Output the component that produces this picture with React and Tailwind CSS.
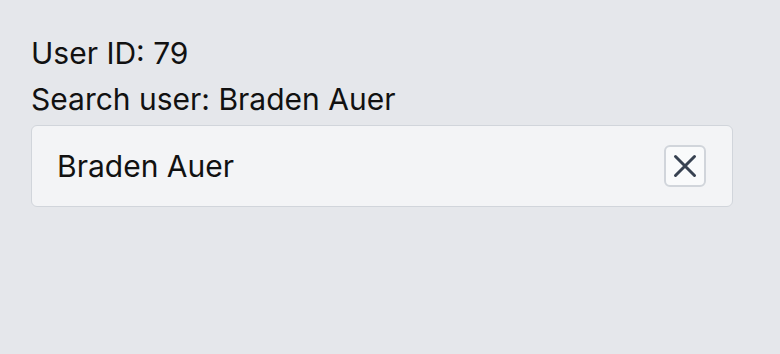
const App = () => {
  return (
    <div className="min-h-[354px] w-full bg-[#e5e7eb] pt-[30px] pl-[31px] pr-[47px] font-['Inter',sans-serif] text-[30px] text-[#111111]">
      <div className="leading-[46px]">User ID: 79</div>
      <div className="leading-[46px]">Search user: Braden Auer</div>

      {/* search box */}
      <div className="mt-[3px] flex h-[82px] items-center justify-between rounded-md border border-[#d1d5db] bg-[#f3f4f6] pl-[25px] pr-[26px]">
        <span>Braden Auer</span>
        <button className="flex h-[42px] w-[42px] items-center justify-center rounded-md border-2 border-[#d1d5db] bg-[#f9fafb] text-[#374151]">
          <svg width="24" height="24" viewBox="0 0 24 24" fill="none" stroke="currentColor" strokeWidth="3" strokeLinecap="round">
            <path d="M2.5 2.5L21.5 21.5M21.5 2.5L2.5 21.5" />
          </svg>
        </button>
      </div>
    </div>
  )
}

export default App
